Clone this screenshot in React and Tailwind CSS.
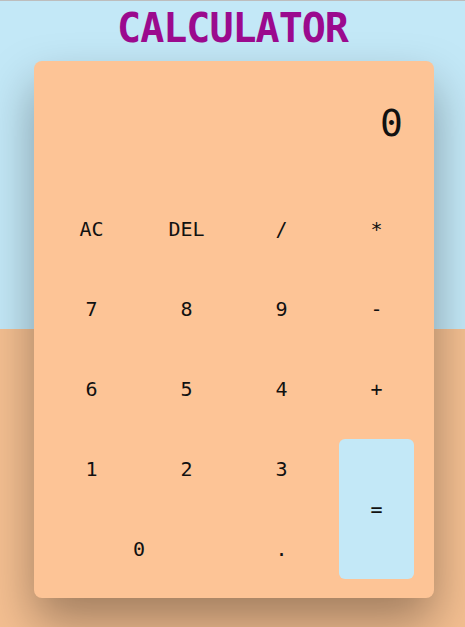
export default function App() {
  const mono = { fontFamily: '"DejaVu Sans Mono", "Liberation Mono", monospace' };
  const btns = [
    ["AC", ""], ["DEL", ""], ["/", ""], ["*", ""],
    ["7", ""], ["8", ""], ["9", ""], ["-", ""],
    ["6", ""], ["5", ""], ["4", ""], ["+", ""],
    ["1", ""], ["2", ""], ["3", ""], ["=", "row-span-2 m-[10px] rounded-md bg-[#c3e8f7]"],
    ["0", "col-span-2"], [".", ""],
  ];
  return (
    <div
      className="min-h-[627px] w-full border-t border-[#bdbdbd] bg-[linear-gradient(to_bottom,#c3e8f7_328px,#f4bf91_328px)]"
      style={mono}
    >
      <h1 className="pt-[7px] text-center text-[40px] font-bold leading-none tracking-[-1px] text-[#9b0a8e]">
        CALCULATOR
      </h1>
      <div className="mt-[13px] ml-[34px] w-[400px] rounded-lg bg-[#fdc496] px-[10px] pb-[9px] shadow-[0_24px_48px_rgba(0,0,0,0.34)]">
        <div className="flex h-[128px] justify-end pr-[21px] pt-[43px] text-[38px] leading-none text-[#111]">
          0
        </div>
        <div className="grid grid-cols-4 auto-rows-[80px] text-[20px] text-[#111]">
          {btns.map(([t, c]) => (
            <div key={t} className={`flex items-center justify-center ${c}`}>
              {t}
            </div>
          ))}
        </div>
      </div>
    </div>
  );
}
